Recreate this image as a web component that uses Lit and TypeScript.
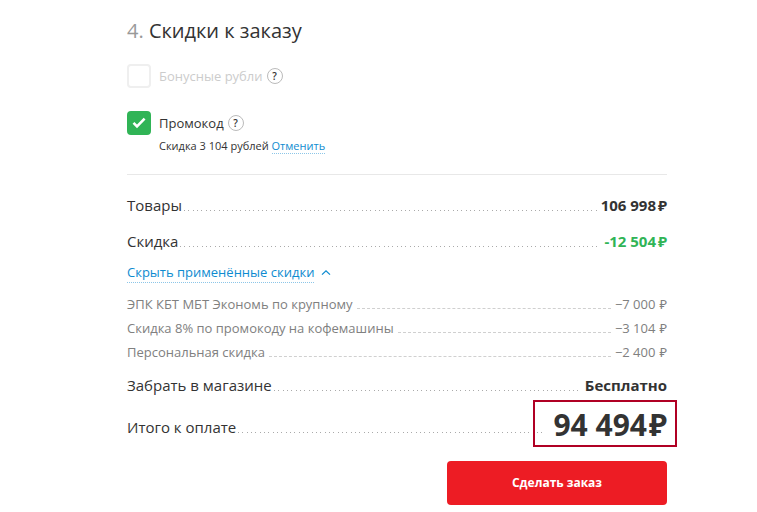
import { LitElement, html, css } from "lit";
import { customElement, state } from "lit/decorators.js";
import { classMap } from "lit/directives/class-map.js";

interface Row {
  label: string;
  amount: string;
  currency?: boolean;
  kind?: string;
}

const discounts: Row[] = [
  { label: "ЭПК КБТ МБТ Экономь по крупному", amount: "−7 000" },
  { label: "Скидка 8% по промокоду на кофемашины", amount: "−3 104" },
  { label: "Персональная скидка", amount: "−2 400" },
];

@customElement("app-root")
export class AppRoot extends LitElement {
  @state() private open = true;

  static styles = css`
    :host {
      display: block;
      background: #fff;
      color: #333;
      font-family: "Open Sans", "Noto Sans", sans-serif;
      font-size: 15px;
      line-height: 24px;
    }
    * {
      box-sizing: border-box;
    }
    main {
      padding: 16px 90px 7px 127px;
    }
    h2 {
      margin: 0 0 18px;
      font-size: 20px;
      line-height: 30px;
      font-weight: 400;
    }
    .step {
      color: #999;
    }
    button {
      font: inherit;
      border: 0;
      padding: 0;
      background: none;
      cursor: pointer;
    }
    .option {
      display: flex;
      align-items: center;
      height: 24px;
      font-size: 13px;
    }
    .option.promo {
      margin-top: 23px;
    }
    .option label {
      display: flex;
      align-items: center;
      gap: 8px;
    }
    .option.off label {
      color: #ccc;
    }
    .box {
      display: grid;
      width: 24px;
      height: 24px;
    }
    .box > * {
      grid-area: 1 / 1;
    }
    input {
      appearance: none;
      margin: 0;
      width: 24px;
      height: 24px;
      border: 2px solid #efefef;
      border-radius: 4px;
      background: #fff;
    }
    input:checked {
      border-color: #30b456;
      background: #30b456;
    }
    .tick {
      display: none;
      pointer-events: none;
    }
    input:checked + .tick {
      display: block;
      z-index: 1;
    }
    .help {
      width: 16px;
      height: 16px;
      margin-left: 4px;
      border: 1px solid #bbb;
      border-radius: 50%;
      color: #333;
      font-size: 10px;
      font-weight: 600;
      line-height: 14px;
      text-align: center;
    }
    .note {
      margin: 0 0 20px;
      padding: 3px 0 0 32px;
      font-size: 11px;
      line-height: 16px;
    }
    a,
    .toggle-text {
      color: #0e8bd0;
      text-decoration: none;
      border-bottom: 1px dotted #8cc6e8;
    }
    dl {
      margin: 0;
      padding-top: 18px;
      border-top: 1px solid #e8e8e8;
    }
    .row {
      display: flex;
    }
    dt,
    dd {
      margin: 0;
      white-space: nowrap;
    }
    dd {
      font-weight: 700;
    }
    .leader {
      flex: 1;
      height: 1px;
      margin: 17px 3px 0 2px;
      background: repeating-linear-gradient(
        90deg,
        #aaa 0 1px,
        transparent 1px 4px,
        #aaa 4px 5px,
        transparent 5px 9px,
        #aaa 9px 10px,
        transparent 10px 13px
      );
    }
    .discount {
      margin-top: 12px;
    }
    .discount .leader {
      margin-right: 7px;
    }
    .discount dd {
      color: #30b456;
    }
    .toggle {
      display: flex;
      align-items: center;
      gap: 7px;
      margin-top: 9px;
      font-size: 13px;
      line-height: 20px;
    }
    .list {
      margin: 9px 0;
    }
    .detail {
      color: #808080;
      font-size: 13px;
    }
    .detail dd {
      font-weight: 400;
    }
    .detail .cur {
      margin-left: 4px;
    }
    .detail .leader {
      margin: 16px 4px 0;
      background: none;
      border-top: 1px dashed #d0d0d0;
    }
    .total {
      margin-top: 8px;
      height: 40px;
    }
    .total dt {
      padding-top: 10px;
    }
    .total .leader {
      margin-top: 27px;
      margin-right: 7px;
    }
    .total dd {
      position: relative;
      font-size: 30px;
      line-height: 40px;
    }
    .total dd::after {
      content: "";
      position: absolute;
      inset: -5px -10px -2px -20px;
      border: 2px solid #b00024;
    }
    .cur {
      margin-left: 2px;
    }
    .submit {
      display: block;
      width: 220px;
      height: 44px;
      margin: 16px 0 0 auto;
      border-radius: 4px;
      background: #ed1c24;
      color: #fff;
      font-size: 12px;
      font-weight: 700;
    }
  `;

  private row({ label, amount, currency = true, kind = "" }: Row) {
    return html`<div class=${classMap({ row: true, [kind || "plain"]: true })}>
      <dt>${label}</dt>
      <span class="leader" aria-hidden="true"></span>
      <dd>${amount}${currency ? html`<span class="cur">₽</span>` : ""}</dd>
    </div>`;
  }

  render() {
    return html`<main>
      <h2><span class="step">4.</span> Скидки к заказу</h2>
      <div class="option off">
        <label><input type="checkbox" disabled />Бонусные рубли</label>
        <button class="help" type="button">?</button>
      </div>
      <div class="option promo">
        <label>
          <span class="box">
            <input type="checkbox" checked />
            <svg class="tick" width="24" height="24" viewBox="0 0 24 24" fill="none">
              <path d="M6.5 11.8 10 15.3 17.6 7.7" stroke="#fff" stroke-width="2.6" />
            </svg>
          </span>
          Промокод
        </label>
        <button class="help" type="button">?</button>
      </div>
      <p class="note">Скидка 3 104 рублей <a href="#">Отменить</a></p>
      <dl>
        ${this.row({ label: "Товары", amount: "106 998" })}
        ${this.row({ label: "Скидка", amount: "-12 504", kind: "discount" })}
        <button
          class="toggle"
          type="button"
          aria-expanded=${this.open}
          @click=${() => (this.open = !this.open)}
        >
          <span class="toggle-text">Скрыть применённые скидки</span>
          <svg width="10" height="7" viewBox="0 0 10 7" fill="none">
            <path d="M1 5.6 5 1.8 9 5.6" stroke="#0e8bd0" stroke-width="1.3" />
          </svg>
        </button>
        <div class="list" ?hidden=${!this.open}>
          ${discounts.map((d) => this.row({ ...d, kind: "detail" }))}
        </div>
        ${this.row({ label: "Забрать в магазине", amount: "Бесплатно", currency: false })}
        ${this.row({ label: "Итого к оплате", amount: "94 494", kind: "total" })}
      </dl>
      <button class="submit" type="button">Сделать заказ</button>
    </main>`;
  }
}
